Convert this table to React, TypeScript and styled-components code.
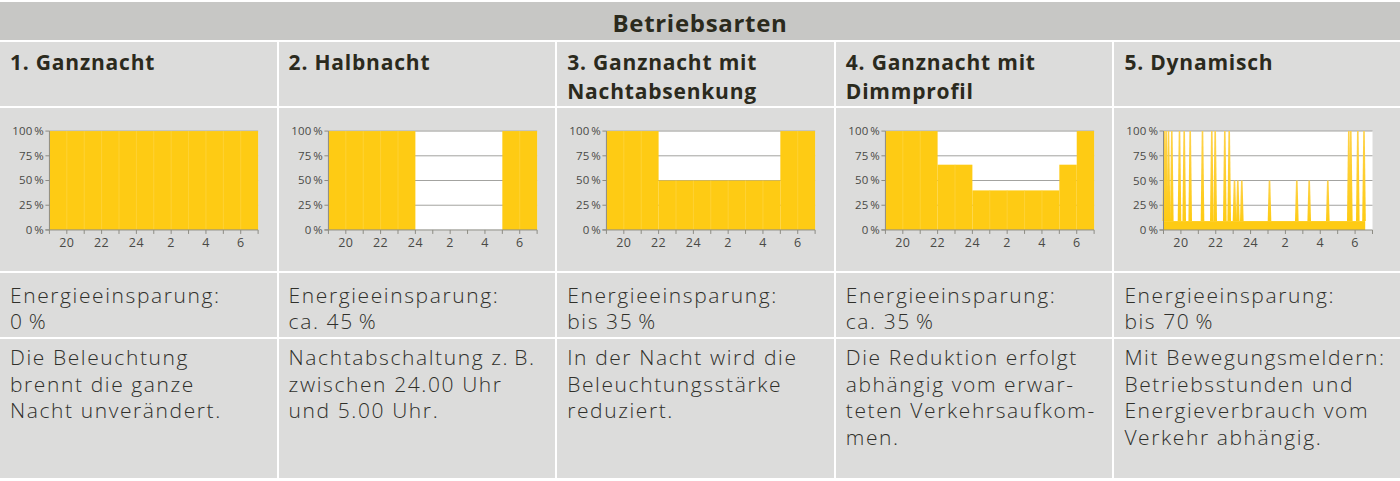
import React from "react";
import styled, { createGlobalStyle } from "styled-components";

const GlobalStyle = createGlobalStyle`
  html, body { margin: 0; padding: 0; background: #ffffff; }
  body { font-family: "Open Sans", "DejaVu Sans", sans-serif; }
`;

const Table = styled.div`
  width: 1400px;
  height: 481px;
  box-sizing: border-box;
  padding: 2px 0 3px;
  display: grid;
  grid-template-columns: repeat(4, 276.6px) 1fr;
  grid-template-rows: 38px 64px 163px 64px 1fr;
  gap: 2px;
  background: #ffffff;
  overflow: hidden;
`;

const HeaderBand = styled.div`
  grid-column: 1 / -1;
  background: #c7c7c5;
  display: flex;
  align-items: center;
  justify-content: center;
  padding-top: 3px;
  box-sizing: border-box;
  font-size: 24px;
  font-weight: 700;
  letter-spacing: 0.7px;
  color: #2b2a1d;
`;

const Cell = styled.div`
  background: #dcdcdb;
  box-sizing: border-box;
  padding: 0 10px;
  overflow: hidden;
`;

const TitleCell = styled(Cell)`
  padding-top: 6px;
  font-size: 21px;
  line-height: 28.5px;
  font-weight: 700;
  letter-spacing: 0.8px;
  color: #2b2a1d;
`;

const ChartCell = styled(Cell)`
  padding: 0;
  display: flex;
`;

const TextCell = styled(Cell)<{ $top: number; $lh: number }>`
  padding-top: ${(p) => p.$top}px;
  font-size: 21px;
  line-height: ${(p) => p.$lh}px;
  font-weight: 300;
  letter-spacing: 1.6px;
  color: #30302b;
`;

const Line = styled.span`
  display: block;
  white-space: nowrap;
`;

const ChartSvg = styled.svg`
  display: block;
  font-family: "Open Sans", "DejaVu Sans", sans-serif;
`;

type Seg = { from: number; to: number; level: number };
type Spike = { x: number; level: number };

type Mode = {
  title: string[];
  segs: Seg[];
  spikes?: Spike[];
  saving: string;
  desc: string[];
};

const PL = 49.5;
const PW = 209;
const PT = 23;
const PH = 99;
const HOUR = PW / 12;
const YELLOW = "#fecb14";
const xh = (h: number) => PL + h * HOUR;
const yl = (l: number) => PT + PH * (1 - l);

const TS = "\u2009";

const BASE = 0.09;

const modes: Mode[] = [
  {
    title: ["1. Ganznacht"],
    segs: [{ from: 0, to: 12, level: 1 }],
    saving: `0${TS}%`,
    desc: ["Die Beleuchtung", "brennt die ganze", "Nacht unverändert."],
  },
  {
    title: ["2. Halbnacht"],
    segs: [
      { from: 0, to: 5, level: 1 },
      { from: 10, to: 12, level: 1 },
    ],
    saving: `ca. 45${TS}%`,
    desc: [`Nachtabschaltung z.${TS}B.`, "zwischen 24.00 Uhr", "und 5.00 Uhr."],
  },
  {
    title: ["3. Ganznacht mit", "Nachtabsenkung"],
    segs: [
      { from: 0, to: 3, level: 1 },
      { from: 3, to: 10, level: 0.5 },
      { from: 10, to: 12, level: 1 },
    ],
    saving: `bis 35${TS}%`,
    desc: ["In der Nacht wird die", "Beleuchtungsstärke", "reduziert."],
  },
  {
    title: ["4. Ganznacht mit", "Dimmprofil"],
    segs: [
      { from: 0, to: 3, level: 1 },
      { from: 3, to: 5, level: 0.66 },
      { from: 5, to: 10, level: 0.4 },
      { from: 10, to: 11, level: 0.66 },
      { from: 11, to: 12, level: 1 },
    ],
    saving: `ca. 35${TS}%`,
    desc: ["Die Reduktion erfolgt", "abhängig vom erwar-", "teten Verkehrsaufkom-", "men."],
  },
  {
    title: ["5. Dynamisch"],
    segs: [{ from: 0, to: 201.7 / HOUR, level: BASE }],
    spikes: [
      { x: 0.8, level: 1 },
      { x: 2.6, level: 1 },
      { x: 5, level: 1 },
      { x: 8.3, level: 1 },
      { x: 16, level: 1 },
      { x: 20.7, level: 1 },
      { x: 26.7, level: 1 },
      { x: 39, level: 1 },
      { x: 48.3, level: 1 },
      { x: 51.7, level: 1 },
      { x: 61.3, level: 1 },
      { x: 65.7, level: 1 },
      { x: 71, level: 0.5 },
      { x: 74.3, level: 0.5 },
      { x: 78.3, level: 0.5 },
      { x: 106, level: 0.5 },
      { x: 133.3, level: 0.5 },
      { x: 145.7, level: 0.5 },
      { x: 164.3, level: 0.5 },
      { x: 185.3, level: 1 },
      { x: 187.3, level: 1 },
      { x: 194.3, level: 1 },
      { x: 200.5, level: 1 },
    ],
    saving: `bis 70${TS}%`,
    desc: ["Mit Bewegungsmeldern:", "Betriebsstunden und", "Energieverbrauch vom", "Verkehr abhängig."],
  },
];

const yLabels = [
  { l: 1, t: `100${TS}%` },
  { l: 0.75, t: `75${TS}%` },
  { l: 0.5, t: `50${TS}%` },
  { l: 0.25, t: `25${TS}%` },
  { l: 0, t: `0${TS}%` },
];

const xLabels = [
  { h: 1, t: "20" },
  { h: 3, t: "22" },
  { h: 5, t: "24" },
  { h: 7, t: "2" },
  { h: 9, t: "4" },
  { h: 11, t: "6" },
];

function Chart({ segs, spikes }: { segs: Seg[]; spikes?: Spike[] }) {
  const bottom = PT + PH;
  const hourLines: React.ReactNode[] = [];
  segs.forEach((s, si) => {
    for (let h = 1; h < 12; h++) {
      if (h > s.from && h < s.to && !spikes) {
        hourLines.push(
          <line
            key={`${si}-${h}`}
            x1={xh(h)}
            x2={xh(h)}
            y1={yl(s.level)}
            y2={bottom}
            stroke="#ffd84c"
            strokeWidth={1}
            opacity={0.6}
          />
        );
      }
    }
  });
  return (
    <ChartSvg width={277} height={163} viewBox="0 0 277 163">
      <defs>
        <linearGradient id="spikeGrad" x1="0" y1="0" x2="0" y2="1">
          <stop offset="0" stopColor="#fed24a" />
          <stop offset="1" stopColor={YELLOW} />
        </linearGradient>
      </defs>
      <rect x={PL} y={PT} width={PW} height={PH} fill="#ffffff" />
      {[1, 0.75, 0.5, 0.25].map((l) => (
        <line key={l} x1={PL} x2={PL + PW} y1={yl(l)} y2={yl(l)} stroke="#a3a3a0" strokeWidth={1} />
      ))}
      {segs.map((s, i) => (
        <rect
          key={i}
          x={xh(s.from)}
          y={yl(s.level)}
          width={(s.to - s.from) * HOUR}
          height={s.level * PH}
          fill={YELLOW}
        />
      ))}
      {hourLines}
      {spikes?.map((sp, i) => {
        const x = PL + sp.x;
        const top = yl(sp.level);
        const base = yl(BASE);
        return (
          <polygon
            key={i}
            points={`${x - 0.8},${top} ${x + 0.8},${top} ${x + 1.8},${base} ${x - 1.8},${base}`}
            fill="url(#spikeGrad)"
          />
        );
      })}
      <line x1={PL} x2={PL} y1={PT} y2={bottom} stroke="#8d8c84" strokeWidth={1} />
      <line x1={PL - 4} x2={PL + PW} y1={bottom} y2={bottom} stroke="#8d8c84" strokeWidth={1} />
      {yLabels.map((y) => (
        <g key={y.t}>
          <line x1={PL - 4} x2={PL} y1={yl(y.l)} y2={yl(y.l)} stroke="#8d8c84" strokeWidth={1} />
          <text
            x={PL - 5.5}
            y={yl(y.l) + 4}
            textAnchor="end"
            fontSize={11.5}
            letterSpacing={0.1}
            fill="#4a4a46"
          >
            {y.t}
          </text>
        </g>
      ))}
      {Array.from({ length: 13 }, (_, h) => (
        <line key={h} x1={xh(h)} x2={xh(h)} y1={bottom} y2={bottom + 4} stroke="#8d8c84" strokeWidth={1} />
      ))}
      {xLabels.map((x) => (
        <text
          key={x.t}
          x={xh(x.h)}
          y={139}
          textAnchor="middle"
          fontSize={12.5}
          letterSpacing={0.5}
          fill="#4a4a46"
        >
          {x.t}
        </text>
      ))}
    </ChartSvg>
  );
}

export default function App() {
  return (
    <>
      <GlobalStyle />
      <Table>
        <HeaderBand>Betriebsarten</HeaderBand>
        {modes.map((m) => (
          <TitleCell key={`t-${m.title[0]}`}>
            {m.title.map((t) => (
              <Line key={t}>{t}</Line>
            ))}
          </TitleCell>
        ))}
        {modes.map((m) => (
          <ChartCell key={`c-${m.title[0]}`}>
            <Chart segs={m.segs} spikes={m.spikes} />
          </ChartCell>
        ))}
        {modes.map((m) => (
          <TextCell key={`e-${m.title[0]}`} $top={9} $lh={26}>
            <Line>Energieeinsparung:</Line>
            <Line>{m.saving}</Line>
          </TextCell>
        ))}
        {modes.map((m) => (
          <TextCell key={`d-${m.title[0]}`} $top={5} $lh={26.5}>
            {m.desc.map((d) => (
              <Line key={d}>{d}</Line>
            ))}
          </TextCell>
        ))}
      </Table>
    </>
  );
}
